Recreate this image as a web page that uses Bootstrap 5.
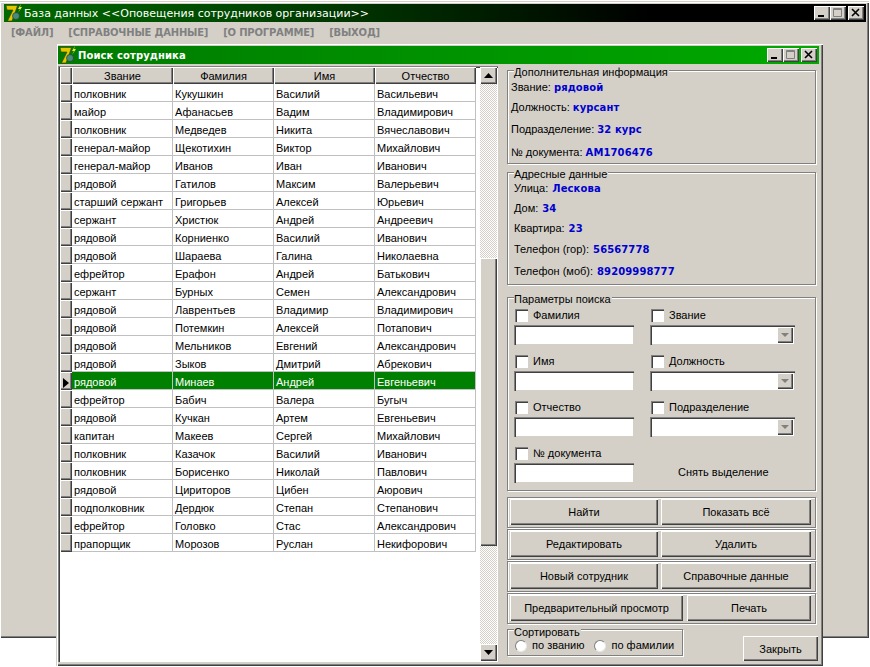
<!DOCTYPE html>
<html lang="ru"><head><meta charset="utf-8"><title>База данных</title>
<link href="https://cdn.jsdelivr.net/npm/bootstrap@5.3.0/dist/css/bootstrap.min.css" rel="stylesheet">
<style>
html,body{margin:0;padding:0;background:#fff;width:870px;height:667px;overflow:hidden;font:11px/13px "Liberation Sans",Arial,sans-serif;color:#000}
.win{position:absolute;background:#d4d0c8;box-shadow:inset 1px 1px 0 #d4d0c8,inset 2px 2px 0 #fff,inset -1px -1px 0 #404040,inset -2px -2px 0 #808080}
.main{left:-1px;top:1px;width:870px;height:637px;padding:3px 3px 3px 5px}
.inner{left:56px;top:43px;width:767px;height:623px;padding:3px 4px 4px 2px}
.tbar{display:flex;align-items:center;color:#fff;font:bold 10px/18px "DejaVu Sans",sans-serif;padding-left:1px;letter-spacing:.1px}
.main .tbar{height:18px;background:linear-gradient(90deg,#006a00 0,#004400 30%,#000 75%);font:normal 11px/18px "DejaVu Sans",sans-serif;letter-spacing:0}
.inner .tbar{height:18px;background:linear-gradient(90deg,#007a00,#00aa00);margin-bottom:2px}
.tbar>span:not(.tb){padding-top:1px}
.tbar svg{flex:none;margin-right:1px}
.tbtns{margin-left:auto;display:flex;padding-right:2px}
.tb{width:16px;height:14px;background:#d4d0c8;box-shadow:inset 1px 1px 0 #fff,inset -1px -1px 0 #404040,inset -2px -2px 0 #808080;display:block;padding:0}
.tb svg{display:block;margin:0}
.tb.xb{margin-left:2px}
.mnu{display:flex;gap:15px;padding:3px 0 0 7px;height:18px;color:#808080;font:bold 10px/15px "DejaVu Sans",sans-serif;letter-spacing:-.2px}
.body2{display:flex;height:596px}
.gridwrap{width:440px;height:596px;margin:0 9px 0 0;box-shadow:inset 1px 1px 0 #808080,inset 2px 2px 0 #404040,inset -1px -1px 0 #fff;background:#fff;display:flex;padding:1px;flex:none}
.tblbox{width:419px;flex:none;padding-left:1px}
table.gt{border-collapse:separate;border-spacing:0;table-layout:fixed;width:416px;margin:0}
.gt th,.gt td{padding:3px 0 0 2px;height:18px;font-weight:normal;white-space:nowrap;overflow:hidden;line-height:14px}
.gt th{text-align:center;background:#d4d0c8;box-shadow:inset 1px 1px 0 #fff,inset -1px -1px 0 #404040,inset -2px -2px 0 #808080;height:17px;padding:1px 0 0;line-height:15px}
.gt td{border-right:1px solid #c0c0c0;border-bottom:1px solid #c0c0c0}
.gt .mk{padding:0;background:#d4d0c8;border:0;box-shadow:inset 1px 1px 0 #fff,inset -1px -1px 0 #404040,inset -2px -2px 0 #808080;position:relative}
.gt tr.sel td:not(.mk){background:#008000;color:#fff}
.mk svg{display:block;margin:4px 0 0 3px}
.sbar{width:17px;flex:none;margin-left:2px;display:flex;flex-direction:column;background:repeating-conic-gradient(#d4d0c8 0 25%,#fff 0 50%) 0 0/2px 2px}
.sb{height:17px;flex:none;background:#d4d0c8;box-shadow:inset 1px 1px 0 #fff,inset -1px -1px 0 #404040,inset -2px -2px 0 #808080}
.sb svg{display:block;margin:6px 0 0 4px}
.thumb{flex:none;background:#d4d0c8;box-shadow:inset 1px 1px 0 #fff,inset -1px -1px 0 #404040,inset -2px -2px 0 #808080;height:288px;margin-top:174px}
.side{width:309px;flex:none;padding-top:4px}
.grp{border:1px solid #808080;box-shadow:inset 1px 1px 0 #fff,1px 1px 0 #fff;position:relative}
.grp>.cap{position:absolute;left:6px;top:-5px;background:#d4d0c8;line-height:12px;padding-right:1px}
.g1{height:94px;padding:10px 0 0 3px;margin-bottom:8px}
.g2{height:113px;padding:9px 0 0 6px;margin-bottom:12px}
.g3{height:194px;padding:9px 0 0 6px;margin-bottom:6px}
.inf{display:flex;gap:4px;align-items:baseline;height:21px;line-height:13px}
.g1 .inf{gap:3px}
.inf b{color:#0000d0;font:bold 10px/13px "DejaVu Sans",sans-serif;letter-spacing:.1px}
.g1 .inf:nth-child(2){height:20px}
.g1 .inf:nth-child(3){height:22px}
.g1 .inf:nth-child(4){height:23px}
.g2 .inf:nth-child(2),.g2 .inf:nth-child(3){height:20px}
.g2 .inf:nth-child(5){height:22px}
.prm{display:grid;grid-template-columns:136px 145px;grid-auto-rows:46px}
.lbl{display:flex;align-items:center;gap:5px;height:16px;margin-bottom:2px;padding-left:1px}
.cb{width:13px;height:13px;background:#fff;box-shadow:inset 1px 1px 0 #808080,inset 2px 2px 0 #404040,inset -1px -1px 0 #fff;flex:none;display:block}
.ed{height:20px;background:#fff;box-shadow:inset 1px 1px 0 #808080,inset 2px 2px 0 #404040,inset -1px -1px 0 #d4d0c8;width:120px;position:relative}
.cmb{width:145px;display:flex;justify-content:flex-end;padding:2px}
.arr{width:16px;height:16px;background:#d4d0c8;box-shadow:inset 1px 1px 0 #fff,inset -1px -1px 0 #404040,inset -2px -2px 0 #808080;display:block}
.arr svg{display:block;margin:6px 0 0 4px}
.clr{padding:21px 0 0 28px}
.bpn{display:flex;gap:3px;height:31px;margin-bottom:1px;padding:1px 4px 1px 2px;border:1px solid #808080;box-shadow:inset 1px 1px 0 #fff,1px 1px 0 #fff}
.wb{display:block;background:#d4d0c8;color:#000;text-align:center;line-height:26px;height:26px;box-shadow:inset 1px 1px 0 #fff,inset -1px -1px 0 #404040,inset -2px -2px 0 #808080}
.bpn .wb{flex:1 1 0}
.bpn .wb:first-child{flex:0 0 148px}
.bpn .w4:first-child{flex:0 0 173px;margin-right:1px}
.bot{display:flex;align-items:flex-start;margin-top:5px;justify-content:space-between}
.g5{width:176px;height:27px;padding:9px 0 0 7px;display:flex;gap:10px}
.g5>.cap{top:-4px}
.rd{display:flex;align-items:center;gap:5px;height:13px}
.rd i{display:block;width:12px;height:12px;border-radius:50%;background:#fff;border:1px solid #808080;border-right-color:#e8e8e8;border-bottom-color:#e8e8e8}
.cl{width:75px;margin-top:7px;margin-right:-2px;height:25px;line-height:26px}
</style></head><body>
<section class="win main">
<div class="tbar"><svg width="18" height="18" viewBox="0 0 18 18"><path d="M1 1.5h11.5l-1 3L7 17H2.5l5.500-11H2z" fill="#e3c800" stroke="#3a3a00" stroke-width=".6"/><circle cx="11" cy="12" r="3.500" fill="#4a8a7a" stroke="#203830" stroke-width=".6"/><path d="M16 0l-3 5 2 0-2 4 4-6h-2z" fill="#ffe23a"/></svg><span>База данных &lt;&lt;Оповещения сотрудников организации&gt;&gt;</span>
<div class="tbtns"><span class="tb"><svg width="16" height="14"><path d="M4 9h6v2H4z"/></svg></span><span class="tb"><svg width="16" height="14"><path d="M3.5 2.500h8v8h-8z" fill="none" stroke="#808080"/><path d="M3 3h9v1H3z" fill="#808080"/></svg></span><span class="tb xb"><svg width="16" height="14"><path d="M4 3l7 7M11 3l-7 7" stroke="#000" stroke-width="1.6"/></svg></span></div></div>
<nav class="mnu"><span>[ФАЙЛ]</span><span>[СПРАВОЧНЫЕ ДАННЫЕ]</span><span>[О ПРОГРАММЕ]</span><span>[ВЫХОД]</span></nav>
</section>
<section class="win inner">
<div class="tbar"><svg width="18" height="18" viewBox="0 0 18 18"><path d="M1 1.5h11.5l-1 3L7 17H2.5l5.500-11H2z" fill="#e3c800" stroke="#3a3a00" stroke-width=".6"/><circle cx="11" cy="12" r="3.500" fill="#4a8a7a" stroke="#203830" stroke-width=".6"/><path d="M16 0l-3 5 2 0-2 4 4-6h-2z" fill="#ffe23a"/></svg><span>Поиск сотрудника</span>
<div class="tbtns"><span class="tb"><svg width="16" height="14"><path d="M4 9h6v2H4z"/></svg></span><span class="tb"><svg width="16" height="14"><path d="M3.5 2.500h8v8h-8z" fill="none" stroke="#808080"/><path d="M3 3h9v1H3z" fill="#808080"/></svg></span><span class="tb xb"><svg width="16" height="14"><path d="M4 3l7 7M11 3l-7 7" stroke="#000" stroke-width="1.6"/></svg></span></div></div>
<div class="body2">
<div class="gridwrap"><div class="tblbox"><table class="gt" id="gt"><colgroup><col style="width:12px"><col style="width:101px"><col style="width:101px"><col style="width:101px"><col style="width:101px"></colgroup>
<thead><tr><th></th><th>Звание</th><th>Фамилия</th><th>Имя</th><th>Отчество</th></tr></thead><tbody id="tb">
<tr><td class="mk"></td><td>полковник</td><td>Кукушкин</td><td>Василий</td><td>Васильевич</td></tr>
<tr><td class="mk"></td><td>майор</td><td>Афанасьев</td><td>Вадим</td><td>Владимирович</td></tr>
<tr><td class="mk"></td><td>полковник</td><td>Медведев</td><td>Никита</td><td>Вячеславович</td></tr>
<tr><td class="mk"></td><td>генерал-майор</td><td>Щекотихин</td><td>Виктор</td><td>Михайлович</td></tr>
<tr><td class="mk"></td><td>генерал-майор</td><td>Иванов</td><td>Иван</td><td>Иванович</td></tr>
<tr><td class="mk"></td><td>рядовой</td><td>Гатилов</td><td>Максим</td><td>Валерьевич</td></tr>
<tr><td class="mk"></td><td>старший сержант</td><td>Григорьев</td><td>Алексей</td><td>Юрьевич</td></tr>
<tr><td class="mk"></td><td>сержант</td><td>Христюк</td><td>Андрей</td><td>Андреевич</td></tr>
<tr><td class="mk"></td><td>рядовой</td><td>Корниенко</td><td>Василий</td><td>Иванович</td></tr>
<tr><td class="mk"></td><td>рядовой</td><td>Шараева</td><td>Галина</td><td>Николаевна</td></tr>
<tr><td class="mk"></td><td>ефрейтор</td><td>Ерафон</td><td>Андрей</td><td>Батькович</td></tr>
<tr><td class="mk"></td><td>сержант</td><td>Бурных</td><td>Семен</td><td>Александрович</td></tr>
<tr><td class="mk"></td><td>рядовой</td><td>Лаврентьев</td><td>Владимир</td><td>Владимирович</td></tr>
<tr><td class="mk"></td><td>рядовой</td><td>Потемкин</td><td>Алексей</td><td>Потапович</td></tr>
<tr><td class="mk"></td><td>рядовой</td><td>Мельников</td><td>Евгений</td><td>Александрович</td></tr>
<tr><td class="mk"></td><td>рядовой</td><td>Зыков</td><td>Дмитрий</td><td>Абрекович</td></tr>
<tr class="sel"><td class="mk"><svg width="6" height="10"><path d="M0 0l6 5-6 5z"/></svg></td><td>рядовой</td><td>Минаев</td><td>Андрей</td><td>Евгеньевич</td></tr>
<tr><td class="mk"></td><td>ефрейтор</td><td>Бабич</td><td>Валера</td><td>Бугыч</td></tr>
<tr><td class="mk"></td><td>рядовой</td><td>Кучкан</td><td>Артем</td><td>Евгеньевич</td></tr>
<tr><td class="mk"></td><td>капитан</td><td>Макеев</td><td>Сергей</td><td>Михайлович</td></tr>
<tr><td class="mk"></td><td>полковник</td><td>Казачок</td><td>Василий</td><td>Иванович</td></tr>
<tr><td class="mk"></td><td>полковник</td><td>Борисенко</td><td>Николай</td><td>Павлович</td></tr>
<tr><td class="mk"></td><td>рядовой</td><td>Цириторов</td><td>Цибен</td><td>Аюрович</td></tr>
<tr><td class="mk"></td><td>подполковник</td><td>Дердюк</td><td>Степан</td><td>Степанович</td></tr>
<tr><td class="mk"></td><td>ефрейтор</td><td>Головко</td><td>Стас</td><td>Александрович</td></tr>
<tr><td class="mk"></td><td>прапорщик</td><td>Морозов</td><td>Руслан</td><td>Некифорович</td></tr>
</tbody></table></div>
<div class="sbar"><div class="sb"><svg width="9" height="5"><path d="M4.5 0L9 5H0z"/></svg></div><div class="thumb"></div><div class="sb mt-auto"><svg width="9" height="5"><path d="M0 0h9L4.5 5z"/></svg></div></div></div>
<div class="side">
<div class="grp g1"><span class="cap">Дополнительная информация</span>
<div class="inf"><span>Звание:</span><b>рядовой</b></div><div class="inf"><span>Должность:</span><b>курсант</b></div><div class="inf"><span>Подразделение:</span><b>32 курс</b></div><div class="inf"><span>№ документа:</span><b>АМ1706476</b></div></div>
<div class="grp g2"><span class="cap">Адресные данные</span>
<div class="inf"><span>Улица:</span><b>Лескова</b></div><div class="inf"><span>Дом:</span><b>34</b></div><div class="inf"><span>Квартира:</span><b>23</b></div><div class="inf"><span>Телефон (гор):</span><b>56567778</b></div><div class="inf"><span>Телефон (моб):</span><b>89209998777</b></div></div>
<div class="grp g3"><span class="cap">Параметры поиска</span><div class="prm">
<div><div class="lbl"><i class="cb"></i>Фамилия</div><div class="ed"></div></div><div><div class="lbl"><i class="cb"></i>Звание</div><div class="ed cmb"><span class="arr"><svg width="8" height="4"><path d="M0 0h8L4 4z" fill="#808080"/></svg></span></div></div>
<div><div class="lbl"><i class="cb"></i>Имя</div><div class="ed"></div></div><div><div class="lbl"><i class="cb"></i>Должность</div><div class="ed cmb"><span class="arr"><svg width="8" height="4"><path d="M0 0h8L4 4z" fill="#808080"/></svg></span></div></div>
<div><div class="lbl"><i class="cb"></i>Отчество</div><div class="ed"></div></div><div><div class="lbl"><i class="cb"></i>Подразделение</div><div class="ed cmb"><span class="arr"><svg width="8" height="4"><path d="M0 0h8L4 4z" fill="#808080"/></svg></span></div></div>
<div><div class="lbl"><i class="cb"></i>№ документа</div><div class="ed"></div></div><div class="clr">Снять выделение</div>
</div></div>
<div class="bpn"><span class="wb">Найти</span><span class="wb">Показать всё</span></div>
<div class="bpn"><span class="wb">Редактировать</span><span class="wb">Удалить</span></div>
<div class="bpn"><span class="wb">Новый сотрудник</span><span class="wb">Справочные данные</span></div>
<div class="bpn"><span class="wb w4">Предварительный просмотр</span><span class="wb">Печать</span></div>
<div class="bot"><div class="grp g5"><span class="cap">Сортировать</span><span class="rd"><i></i>по званию</span><span class="rd"><i></i>по фамилии</span></div><span class="wb cl">Закрыть</span></div>
</div></div>
</section>
<script src="https://cdn.jsdelivr.net/npm/bootstrap@5.3.0/dist/js/bootstrap.bundle.min.js"></script>
</body></html>
